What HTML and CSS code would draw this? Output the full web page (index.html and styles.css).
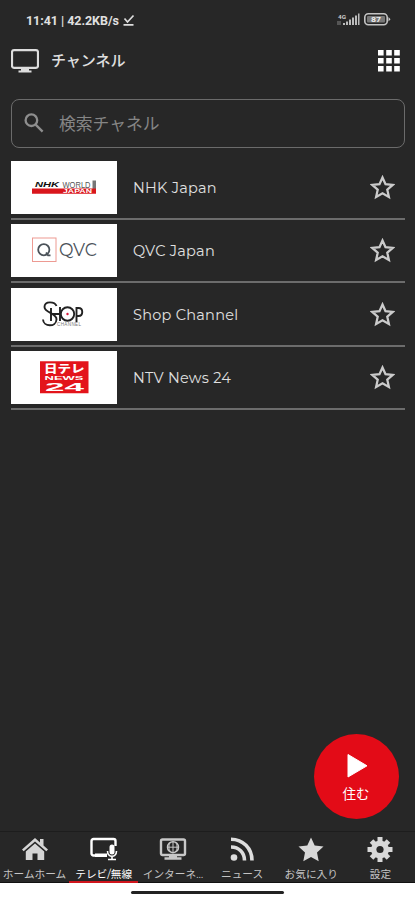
FILE: index.html
```html
<!DOCTYPE html>
<html lang="ja">
<head>
  <meta charset="UTF-8" />
  <meta name="viewport" content="width=device-width, initial-scale=1.0" />
  <title>チャンネル</title>
  <link rel="stylesheet" href="styles.css">
</head>
<body>
  <svg width="0" height="0" class="defs">
    <symbol id="star-outline" viewBox="0 0 24 24">
      <path d="M12 2.4l2.9 6.4 6.9.7-5.2 4.6 1.5 6.9-6.1-3.5-6.1 3.5 1.5-6.9-5.2-4.6 6.9-.7z" fill="none" stroke="currentColor" stroke-width="2.2"/>
    </symbol>
  </svg>

  <div class="app">
    <div class="status-bar">
      <span class="status-text">11:41 | 42.2KB/s</span>
      <svg class="check" width="12" height="13" viewBox="0 0 12 13"><path d="M1.5 4.5l3 3.5L10.5 1.5M.5 10.8h10" fill="none" stroke="#ddd" stroke-width="1.7"/></svg>
      <svg class="signal" width="55" height="14" viewBox="0 0 55 14">
        <text x="2" y="5.5" font-size="6" font-weight="700" textLength="8" lengthAdjust="spacingAndGlyphs" fill="#ccc">4G</text>
        <path d="M1 8h4v4H1z" fill="#555"/>
        <path d="M7 10h2v2H7zM10 8.5h2V12h-2zM13 6.5h2V12h-2zM16 4.5h2V12h-2zM19 2.5h2V12h-2zM22 .5h1.5V12H22z" fill="#bbb"/>
        <rect x="28.8" y=".8" width="22.4" height="10.9" rx="3.5" fill="none" stroke="#c4c4c4" stroke-width="1.6"/>
        <rect x="31" y="3" width="18" height="6.5" rx="1" fill="#777"/>
        <path d="M52.5 4l2 2.2-2 2.2z" fill="#ccc"/>
        <text x="35" y="9.2" font-size="8" font-weight="700" textLength="10" lengthAdjust="spacingAndGlyphs" fill="#eee">87</text>
      </svg>
    </div>

    <div class="header">
      <svg width="28" height="24" viewBox="0 0 28 24">
        <rect x="1" y="1.2" width="26" height="17.6" rx="2" fill="none" stroke="#ddd" stroke-width="2.2"/>
        <path d="M10 19.5h8v2h2.5V23.5h-13v-2H10z" fill="#ddd"/>
      </svg>
      <h1>チャンネル</h1>
      <svg class="grid-icon" width="22" height="22" viewBox="0 0 22 22" fill="#fff">
        <path d="M0 0h5.6v5.6H0zM8.2 0h5.6v5.6H8.2zM16.2 0h5.6v5.6h-5.6zM0 8h5.6v5.6H0zM8.2 8h5.6v5.6H8.2zM16.2 8h5.6v5.6h-5.6zM0 16h5.6v5.6H0zM8.2 16h5.6v5.6H8.2zM16.2 16h5.6v5.6h-5.6z"/>
      </svg>
    </div>

    <div class="search">
      <svg width="20" height="20" viewBox="0 0 20 20" fill="none" stroke="#8e8e8e" stroke-width="2.3">
        <circle cx="7.4" cy="7.2" r="5.8"/><path d="M11.6 11.6l7 7"/>
      </svg>
      <span>検索チャネル</span>
    </div>

    <div class="channels">
      <div class="channel">
        <svg class="logo" viewBox="0 0 106 53">
          <text class="nhk" x="24" y="26" font-size="7.2" textLength="24" lengthAdjust="spacingAndGlyphs">NHK</text>
          <text class="world" x="51.5" y="26.5" font-size="8.5" textLength="28" lengthAdjust="spacingAndGlyphs">WORLD</text>
          <path d="M81.5 19.5h3.5v9h-3.5z" fill="#777"/>
          <path d="M21 27.5h64v5.3H21z" fill="#d9161c"/>
          <text class="japan" x="52" y="32.4" font-size="6" textLength="29" lengthAdjust="spacingAndGlyphs">JAPAN</text>
        </svg>
        <span class="name">NHK Japan</span>
        <svg class="star" width="25" height="25"><use href="#star-outline"/></svg>
      </div>
      <div class="channel">
        <svg class="logo" viewBox="0 0 106 53">
          <rect x="21.5" y="14" width="23.5" height="23.5" fill="none" stroke="#ed9a92"/>
          <g fill="none" stroke="#4b5259" stroke-width="1.8">
            <circle cx="32.8" cy="25.7" r="5.6"/><path d="M35 28.5l2 2.8h2.5"/>
          </g>
          <text class="qvc" x="48" y="32.4" font-size="18.5" textLength="38" lengthAdjust="spacingAndGlyphs">QVC</text>
        </svg>
        <span class="name">QVC Japan</span>
        <svg class="star" width="25" height="25"><use href="#star-outline"/></svg>
      </div>
      <div class="channel">
        <svg class="logo" viewBox="0 0 106 53">
          <g fill="none" stroke="#222" stroke-width="1.9">
            <path d="M45.5 18c-1.5-4.5-12-5.5-12 1 0 6 12.5 6 12 12.5-.5 8-13 7.5-13.5 0"/>
            <path d="M40 20v13M40 26h9M49 19v14"/>
            <circle cx="56.5" cy="26" r="6.7"/>
            <path d="M65.5 34V20h2c5 0 5 8 0 8h-2"/>
          </g>
          <circle cx="56.5" cy="26" r="1.2" fill="#d81b3c"/>
          <text x="46" y="37.5" font-size="4.5" textLength="24" fill="#777">CHANNEL</text>
        </svg>
        <span class="name">Shop Channel</span>
        <svg class="star" width="25" height="25"><use href="#star-outline"/></svg>
      </div>
      <div class="channel">
        <svg class="logo" viewBox="0 0 106 53">
          <path d="M29 10.2h48.5v32H29z" fill="#e3141b"/>
          <text class="ntv kana" transform="translate(33 22.3) scale(1 .8)" font-size="13.5">日テレ</text>
          <text class="ntv" transform="translate(33.5 29.3) scale(1.9 1)" font-size="5.5" textLength="20.5" lengthAdjust="spacingAndGlyphs">NEWS</text>
          <text class="ntv" transform="translate(34 40.3) scale(1.9 1)" font-size="11.5" textLength="20.5" lengthAdjust="spacingAndGlyphs">24</text>
        </svg>
        <span class="name">NTV News 24</span>
        <svg class="star" width="25" height="25"><use href="#star-outline"/></svg>
      </div>
    </div>

    <div class="nav">
      <div class="tab">
        <svg width="28" height="26" viewBox="0 0 28 26" fill="#d5d5d5">
          <path d="M14 1L1 12.5l1.7 1.8L14 4.6l11.3 9.7 1.7-1.8-4.5-4V2h-3.5v3.4z"/>
          <path d="M14 6.5L4.8 14.4V23H11.5v-6.5h5V23h6.7v-8.6z"/>
        </svg>
        <span>ホームホーム</span>
      </div>
      <div class="tab active">
        <svg width="28" height="26" viewBox="0 0 28 26">
          <path d="M17 18.5H3.5a2 2 0 0 1-2-2V4a2 2 0 0 1 2-2h20a2 2 0 0 1 2 2v5" fill="none" stroke="#fff" stroke-width="2.4"/>
          <path d="M5 16.5h12v3.5H5z" fill="#fff"/>
          <rect x="19.5" y="7.5" width="5" height="10" rx="2.5" fill="#fff"/>
          <path d="M17.5 14c0 7 9 7 9 0M22 19v4M18 22.5h8" fill="none" stroke="#fff" stroke-width="1.6"/>
        </svg>
        <span>テレビ/無線</span>
      </div>
      <div class="tab">
        <svg width="28" height="26" viewBox="0 0 28 26" fill="none" stroke="#c8c8c8">
          <rect x="2" y="2.5" width="24" height="15.5" rx="1.5" stroke-width="2.4"/>
          <circle cx="14" cy="10.2" r="5.5" stroke-width="1.5"/>
          <path d="M8.5 10.2h11M14 4.5v11M11.5 5c-2 3-2 7 0 10M16.5 5c2 3 2 7 0 10"/>
          <path d="M10 19.5h8M5.5 21.5h17" stroke-width="2.4"/>
        </svg>
        <span>インターネ…</span>
      </div>
      <div class="tab">
        <svg width="28" height="26" viewBox="0 0 28 26" fill="none" stroke="#dedede" stroke-width="3.6">
          <circle cx="6" cy="20.5" r="3.3" fill="#dedede" stroke="none"/>
          <path d="M3 10c7.800 0 13.5 5.7 13.5 13.5M3 2.2c12 0 21 9.3 21 21.3"/>
        </svg>
        <span>ニュース</span>
      </div>
      <div class="tab">
        <svg width="28" height="26" viewBox="0 0 28 26" fill="#d8d8d8">
          <path d="M14 .5l3.7 8 8.8 1-6.5 6 1.7 8.7L14 19.9l-7.7 4.3L8 15.5l-6.5-6 8.8-1z"/>
        </svg>
        <span>お気に入り</span>
      </div>
      <div class="tab">
        <svg width="28" height="26" viewBox="0 0 28 26">
          <g stroke="#d8d8d8" stroke-width="5">
            <path d="M14 0v25M1.5 12.5h25M5.5 4l17 17M22.5 4l-17 17"/>
          </g>
          <circle cx="14" cy="12.5" r="9" fill="#d8d8d8"/>
          <circle cx="14" cy="12.5" r="3.6" fill="#272727"/>
        </svg>
        <span>設定</span>
      </div>
    </div>
    <div class="system-bar"><div class="home-handle"></div></div>

    <div class="live-btn">
      <svg width="21" height="26" viewBox="0 0 21 26"><path d="M1 1.5v22.5L20 12.8z" fill="#fff" stroke="#fff" stroke-linejoin="round"/></svg>
      <span>住む</span>
    </div>
  </div>
</body>
</html>
```

FILE: styles.css
```css
* {
  box-sizing: border-box;
}
body {
  margin: 0;
  background: #272727;
  color: #e0e0e0;
  font-family: Montserrat, Inter, "Noto Sans CJK JP", sans-serif;
}
svg {
  display: block;
  flex-shrink: 0;
}
.defs {
  position: absolute;
}
.app {
  position: relative;
  width: 415px;
  height: 900px;
  display: flex;
  flex-direction: column;
  overflow: hidden;
}
.status-bar {
  height: 40px;
  padding: 0 24px 0 26px;
  display: flex;
  align-items: center;
  font-family: Roboto, sans-serif;
}
.status-text {
  font-size: 12.5px;
  font-weight: 700;
  letter-spacing: -0.05px;
}
.check {
  margin-left: 4px;
}
.signal {
  margin-left: auto;
}
.header {
  height: 42px;
  padding: 0 15px 0 11px;
  display: flex;
  align-items: center;
}
.header h1 {
  margin: 0 0 0 12px;
  font-size: 15px;
  font-weight: 500;
  line-height: 20px;
}
.grid-icon {
  margin-left: auto;
}
.search {
  height: 49px;
  margin: 17px 10px 0 11px;
  padding: 0 12px;
  border: 1.5px solid #6b6b6b;
  border-radius: 8px;
  display: flex;
  align-items: center;
  gap: 15px;
  color: #858585;
  font-size: 16.8px;
}
.search svg {
  margin-top: -1px;
}
.search span {
  margin-top: -2px;
}
.channels {
  margin: 8px 10px 0 11px;
}
.channel {
  height: 63.5px;
  padding: 5.5px 10px 4.5px 0;
  border-bottom: 2px solid #6c6c6c;
  display: flex;
  align-items: center;
}
.logo {
  width: 106px;
  height: 53px;
  background: #fff;
  font-family: "Liberation Sans", "Noto Sans CJK JP", sans-serif;
}
.nhk {
  font-weight: 700;
  font-style: italic;
  fill: #111;
}
.world {
  fill: #555;
}
.japan {
  fill: #fff;
  font-weight: 700;
}
.qvc {
  font-family: Montserrat, Lato, sans-serif;
  fill: #4b5259;
}
.ntv {
  font-family: "Liberation Sans", sans-serif;
  font-weight: 700;
  fill: #fff;
}
.kana {
  font-family: "Noto Sans CJK JP", sans-serif;
  font-weight: 900;
}
.name {
  margin: 1px 0 0 16px;
  font-size: 14.5px;
  letter-spacing: 0.25px;
}
.star {
  margin: 0 0 0 auto;
  color: #cbcbcb;
}
.nav {
  height: 52px;
  margin-top: auto;
  border-top: 1px solid #1d1d1d;
  display: grid;
  grid-template-columns: repeat(6, 1fr);
}
.tab {
  padding-top: 5px;
  display: flex;
  flex-direction: column;
  align-items: center;
  gap: 5px;
  color: #c4c4c4;
  font-size: 10.7px;
  line-height: 13px;
  white-space: nowrap;
  border-bottom: 2px solid #111;
}
.tab.active {
  color: #fff;
  border-bottom: 3px solid #d0151c;
}
.system-bar {
  height: 17px;
  padding-top: 1px;
  background: #fff;
  display: flex;
  justify-content: center;
  align-items: center;
}
.home-handle {
  width: 153px;
  height: 3px;
  border-radius: 2px;
  background: #222;
}
.live-btn {
  position: absolute;
  right: 16px;
  bottom: 81px;
  width: 85px;
  height: 85px;
  padding: 19px 0 0 2px;
  border-radius: 50%;
  background: #e30b17;
  color: #fff;
  display: flex;
  flex-direction: column;
  align-items: center;
  gap: 6px;
  font-size: 13.5px;
  line-height: 18px;
}
.live-btn span {
  margin-right: 3px;
}
```
